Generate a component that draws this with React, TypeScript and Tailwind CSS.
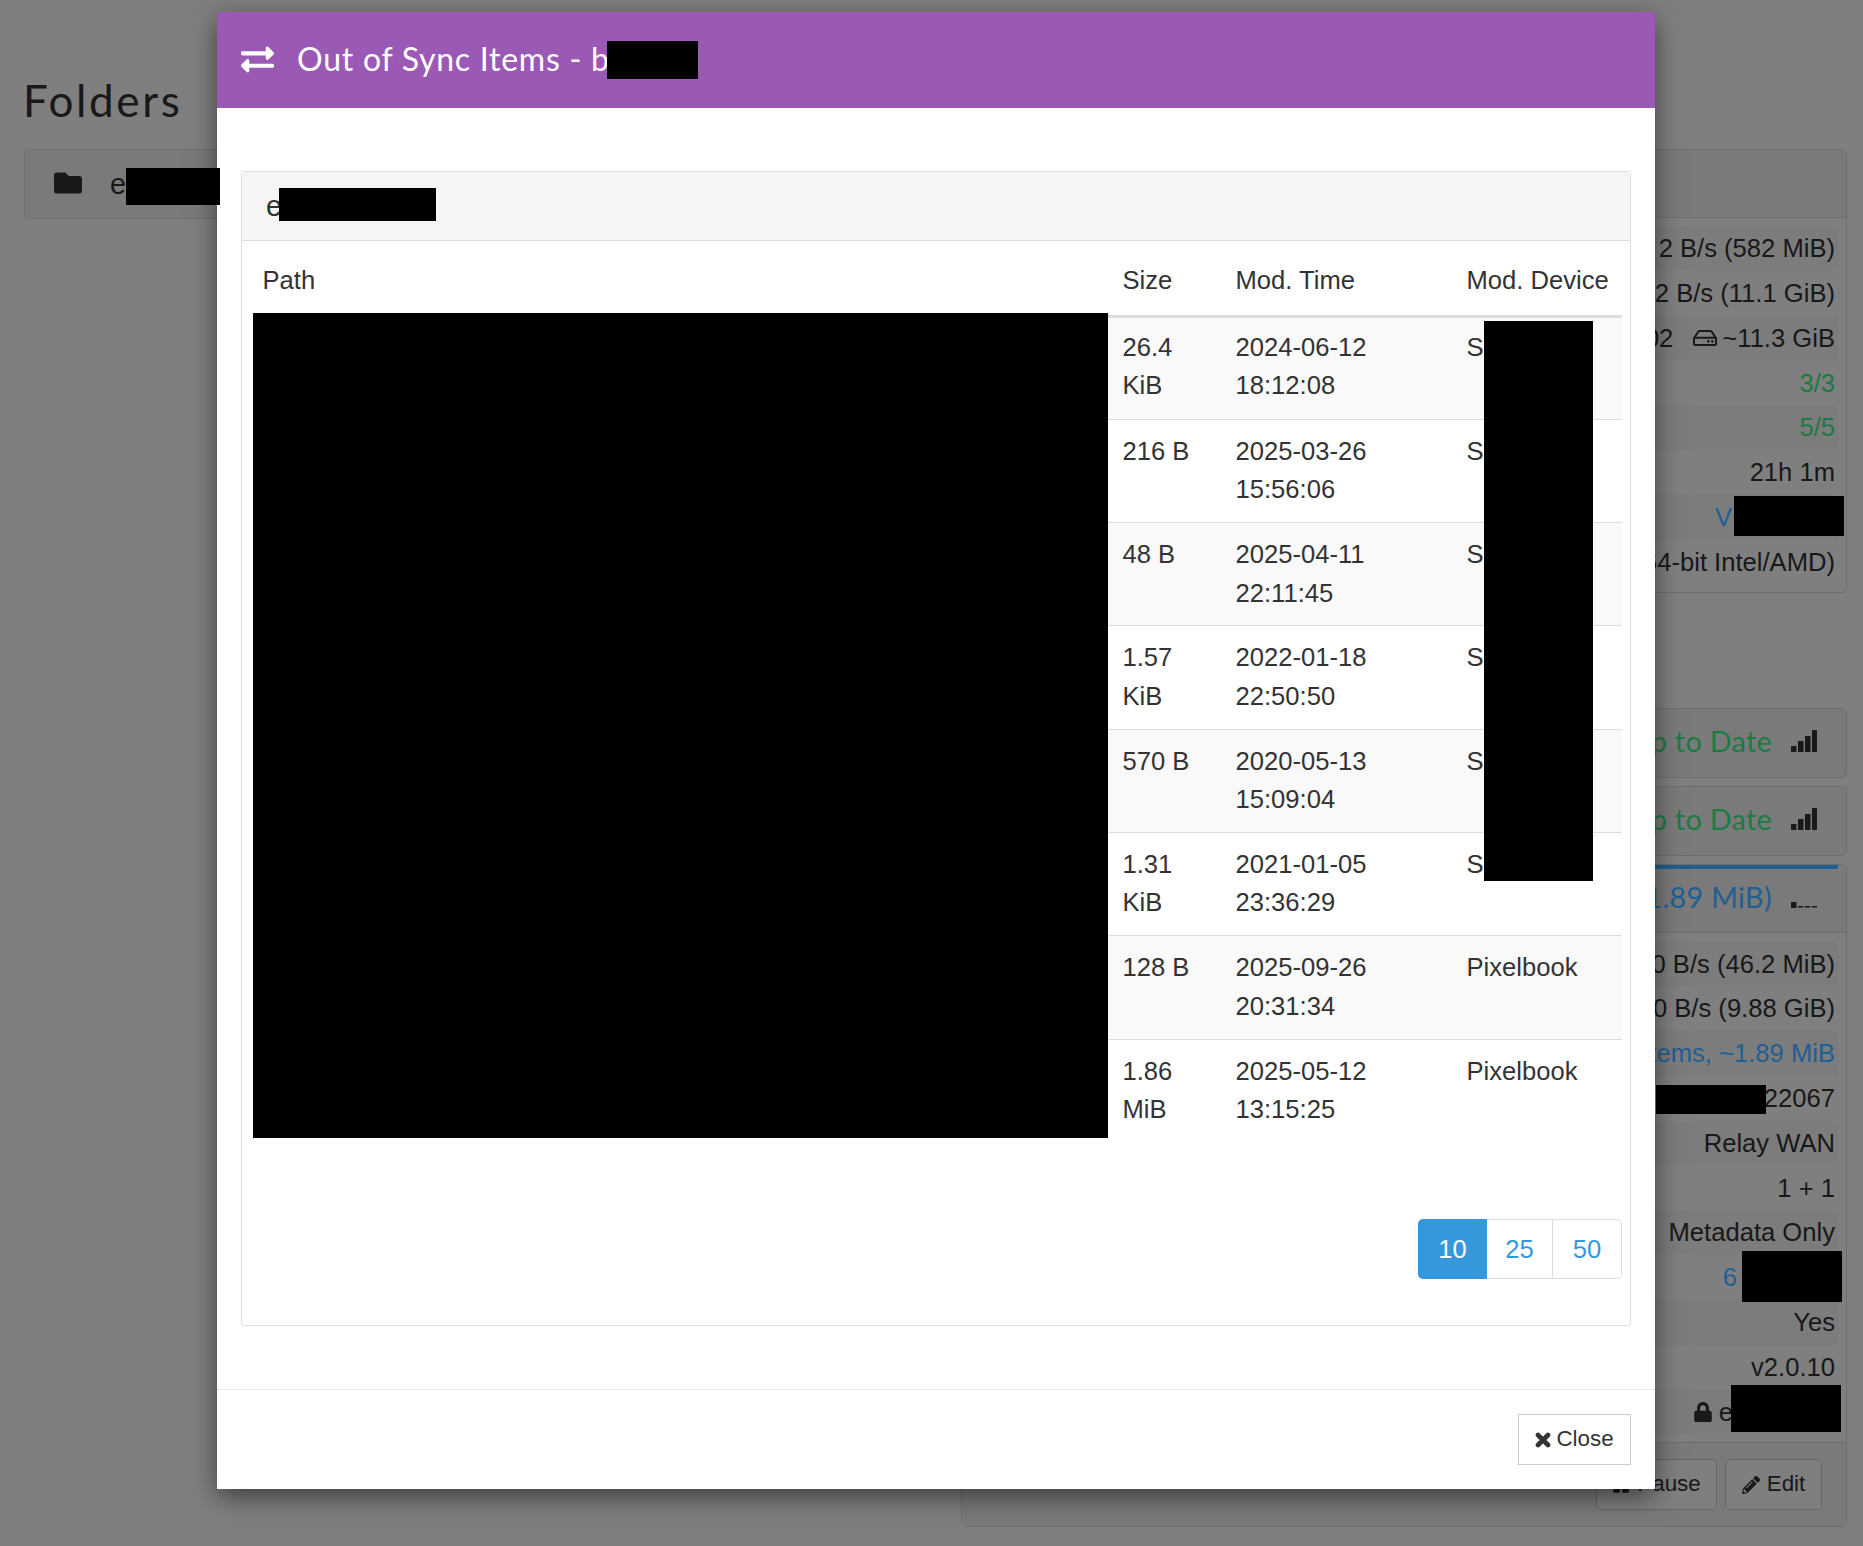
import { ReactNode } from "react";
import { FaExchangeAlt, FaFolder, FaLock, FaPause, FaPencilAlt, FaRegHdd } from "react-icons/fa";

type FileRow = { size: string; date: string; time: string; device: string };

const files: FileRow[] = [
  { size: "26.4 KiB", date: "2024-06-12", time: "18:12:08", device: "S" },
  { size: "216 B", date: "2025-03-26", time: "15:56:06", device: "S" },
  { size: "48 B", date: "2025-04-11", time: "22:11:45", device: "S" },
  { size: "1.57 KiB", date: "2022-01-18", time: "22:50:50", device: "S" },
  { size: "570 B", date: "2020-05-13", time: "15:09:04", device: "S" },
  { size: "1.31 KiB", date: "2021-01-05", time: "23:36:29", device: "S" },
  { size: "128 B", date: "2025-09-26", time: "20:31:34", device: "Pixelbook" },
  { size: "1.86 MiB", date: "2025-05-12", time: "13:15:25", device: "Pixelbook" },
];

const InfoRow = ({ children, className = "pr-[3px]" }: { children: ReactNode; className?: string }) => (
  <div className={`flex h-[44.8px] items-center justify-end whitespace-nowrap odd:bg-[#f9f9f9] ${className}`}>
    {children}
  </div>
);

// coloured labels sit above the backdrop so they keep the brightness of the screenshot
const Tinted = ({ children, className }: { children: ReactNode; className: string }) => (
  <span className={`relative z-[15] ${className}`}>{children}</span>
);

const Signal = ({ level }: { level: number }) => (
  <svg viewBox="0 0 26 22" className="ml-[19px] h-[22px] w-[26px] fill-[#333]">
    {[
      { x: 0, y: 16, h: 6 },
      { x: 7, y: 11, h: 11 },
      { x: 14, y: 6, h: 16 },
      { x: 21, y: 0, h: 22 },
    ].map((bar, i) =>
      i < level ? (
        <rect key={bar.x} x={bar.x} y={bar.y} width="5.5" height={bar.h} />
      ) : (
        <rect key={bar.x} x={bar.x} y="20" width="5.5" height="1.5" />
      ),
    )}
  </svg>
);

const DeviceHeading = ({ text, color, level }: { text: string; color: string; level: number }) => (
  <div className="flex h-[68px] items-center justify-end whitespace-nowrap pb-[4px] pr-[29px] font-['Lato',sans-serif] text-[28.8px] tracking-[0.3px]">
    <Tinted className={color}>{text}</Tinted>
    <Signal level={level} />
  </div>
);

export default function App() {
  return (
    <div className="relative h-[1546px] overflow-hidden bg-white font-['Liberation_Sans',Arial,sans-serif] text-[25.6px] leading-[38.4px] text-[#333]">
      {/* page behind the dialog */}
      <div className="flex">
        <div className="w-[961px] shrink-0 pl-[23px] pr-[41px]">
          <h1 className="flex h-[149px] items-center pt-[50px] font-['Lato',sans-serif] text-[44px] leading-none tracking-[2.6px]">Folders</h1>
          <div className="ml-[1px] flex h-[70px] items-center rounded-[5px] border border-[#ddd] bg-[#f5f5f5] pl-[29px] text-[28.8px]">
            <FaFolder className="mb-[2px] mr-[28px] h-[28px] w-[28px] text-[#333]" />e
          </div>
        </div>
        <div className="w-[886px] shrink-0 pt-[149px]">
          <div className="rounded-[5px] border border-[#ddd]">
            <div className="h-[68px] border-b border-[#ddd] bg-[#f5f5f5]" />
            <div className="px-[8px] py-[8px]">
              <InfoRow>2 B/s (582 MiB)</InfoRow>
              <InfoRow>2 B/s (11.1 GiB)</InfoRow>
              <InfoRow>
                02
                <FaRegHdd className="ml-[20px] mr-[5px] h-[22px] w-[24px]" />
                ~11.3 GiB
              </InfoRow>
              <InfoRow>
                <Tinted className="text-[#1c7a45]">3/3</Tinted>
              </InfoRow>
              <InfoRow>
                <Tinted className="text-[#1c7a45]">5/5</Tinted>
              </InfoRow>
              <InfoRow>21h 1m</InfoRow>
              <InfoRow className="pr-[106px]">
                <Tinted className="text-[#1f5f92]">V</Tinted>
              </InfoRow>
              <InfoRow>64-bit Intel/AMD)</InfoRow>
            </div>
          </div>

          <div className="mt-[115px] rounded-[5px] border border-[#ddd] bg-[#f5f5f5]">
            <DeviceHeading text="Up to Date" color="text-[#1c7a45]" level={4} />
          </div>
          <div className="mt-[8px] rounded-[5px] border border-[#ddd] bg-[#f5f5f5]">
            <DeviceHeading text="Up to Date" color="text-[#1c7a45]" level={4} />
          </div>

          <div className="mt-[8px] rounded-[5px] border border-[#ddd]">
            <div className="border-b border-[#ddd] bg-[#f5f5f5]">
              <div className="relative z-[15] mr-[8px] h-[4px] bg-[#1f5f92]" />
              <div className="-mt-[4px] -mb-[1px]">
                <DeviceHeading text="1.89 MiB)" color="text-[#1f5f92]" level={1} />
              </div>
            </div>
            <div className="px-[8px] py-[8px]">
              <InfoRow>0 B/s (46.2 MiB)</InfoRow>
              <InfoRow>0 B/s (9.88 GiB)</InfoRow>
              <InfoRow>
                <Tinted className="text-[#1f5f92]">items, ~1.89 MiB</Tinted>
              </InfoRow>
              <InfoRow>22067</InfoRow>
              <InfoRow>Relay WAN</InfoRow>
              <InfoRow>1 + 1</InfoRow>
              <InfoRow>Metadata Only</InfoRow>
              <InfoRow className="pr-[101px]">
                <Tinted className="text-[#1f5f92]">6</Tinted>
              </InfoRow>
              <InfoRow>Yes</InfoRow>
              <InfoRow>v2.0.10</InfoRow>
              <InfoRow className="pr-[105px]">
                <FaLock className="mr-[7px] h-[20px] w-[18px]" />e
              </InfoRow>
            </div>
            <div className="flex h-[84px] items-start justify-end gap-[8px] border-t border-[#ddd] bg-[#f5f5f5] pr-[24px] pt-[16px] text-[22.4px]">
              <div className="flex h-[51px] w-[121px] items-center justify-center gap-[7px] rounded-[5px] border border-[#ccc] bg-white">
                <FaPause className="h-[18px] w-[18px]" />
                Pause
              </div>
              <div className="flex h-[51px] w-[97px] items-center justify-center gap-[7px] rounded-[5px] border border-[#ccc] bg-white">
                <FaPencilAlt className="h-[18px] w-[18px]" />
                Edit
              </div>
            </div>
          </div>
        </div>
      </div>

      <div className="absolute inset-0 z-10 bg-black/50" />

      {/* dialog */}
      <div className="absolute left-[217px] top-[12px] z-20 w-[1438px] bg-white shadow-[0_8px_24px_rgba(0,0,0,0.5)]">
        <div className="flex h-[96px] items-center bg-[#9b59b6] pb-[2px] pl-[24px] font-['Lato',sans-serif] text-[32px] tracking-[0.75px] text-white">
          <FaExchangeAlt className="mr-[23px] h-[33px] w-[33px]" />
          Out of Sync Items - b
        </div>

        <div className="px-[24px] pb-[63px] pt-[63px]">
          <div className="h-[1155px] rounded-[3px] border border-[#ddd]">
            <div className="flex h-[69px] items-center border-b border-[#ddd] bg-[#f5f5f5] pl-[24px] text-[28.8px]">e</div>
            <div className="pl-[11px] pr-[8px] pt-[8px]">
              <table className="w-[1369px] table-fixed border-collapse text-left">
                <colgroup>
                  <col className="w-[860px]" />
                  <col className="w-[113px]" />
                  <col className="w-[231px]" />
                  <col className="w-[165px]" />
                </colgroup>
                <thead>
                  <tr className="h-[67px] border-b-[3px] border-[#ddd]">
                    <th className="pb-[4px] pl-[9.5px] font-normal">Path</th>
                    <th className="pb-[4px] pl-[9.5px] font-normal">Size</th>
                    <th className="pb-[4px] pl-[9.5px] font-normal">Mod. Time</th>
                    <th className="pb-[4px] pl-[9.5px] font-normal">Mod. Device</th>
                  </tr>
                </thead>
                <tbody>
                  {files.map((file, i) => {
                    const pad = i === 0 ? "pt-[10px]" : "pt-[12px]";
                    return (
                      <tr
                        key={file.date}
                        className={`h-[103.3px] align-top ${i < files.length - 1 ? "border-b border-[#ddd]" : ""} ${i % 2 === 0 ? "bg-[#f9f9f9]" : ""}`}
                      >
                        <td />
                        <td className={`pb-[11px] pl-[9.5px] pr-[12px] ${pad}`}>{file.size}</td>
                        <td className={`pb-[11px] pl-[9.5px] ${pad}`}>
                          {file.date}
                          <br />
                          {file.time}
                        </td>
                        <td className={`pb-[11px] pl-[9.5px] ${pad}`}>{file.device}</td>
                      </tr>
                    );
                  })}
                </tbody>
              </table>
              <div className="mt-[77px] flex justify-end">
                <div className="flex h-[60px] w-[69px] items-center justify-center rounded-l-[5px] bg-[#3498db] text-white">10</div>
                <div className="flex h-[60px] w-[66px] items-center justify-center border-y border-r border-[#ddd] text-[#3498db]">25</div>
                <div className="flex h-[60px] w-[69px] items-center justify-center rounded-r-[5px] border-y border-r border-[#ddd] text-[#3498db]">50</div>
              </div>
            </div>
          </div>
        </div>

        <div className="flex h-[100px] justify-end border-t border-[#e5e5e5] pr-[24px] pt-[24px]">
          <div className="flex h-[51px] w-[113px] items-center justify-center gap-[5px] border border-[#ccc] text-[22.4px]">
            <svg viewBox="0 0 16 16" className="h-[16px] w-[16px] stroke-[#333]" fill="none" strokeWidth="4.6" strokeLinecap="round">
              <path d="M3 3 13 13M13 3 3 13" />
            </svg>
            Close
          </div>
        </div>
      </div>

      {/* blacked out parts of the screenshot */}
      <div className="absolute left-[126px] top-[168px] z-30 h-[37px] w-[94px] bg-black" />
      <div className="absolute left-[607px] top-[41px] z-30 h-[38px] w-[91px] bg-black" />
      <div className="absolute left-[279px] top-[188px] z-30 h-[33px] w-[157px] bg-black" />
      <div className="absolute left-[253px] top-[313px] z-30 h-[825px] w-[855px] bg-black" />
      <div className="absolute left-[1484px] top-[321px] z-30 h-[560px] w-[109px] bg-black" />
      <div className="absolute left-[1734px] top-[496px] z-30 h-[40px] w-[110px] bg-black" />
      <div className="absolute left-[1656px] top-[1085px] z-30 h-[29px] w-[110px] bg-black" />
      <div className="absolute left-[1742px] top-[1251px] z-30 h-[51px] w-[100px] bg-black" />
      <div className="absolute left-[1731px] top-[1385px] z-30 h-[47px] w-[110px] bg-black" />
    </div>
  );
}
